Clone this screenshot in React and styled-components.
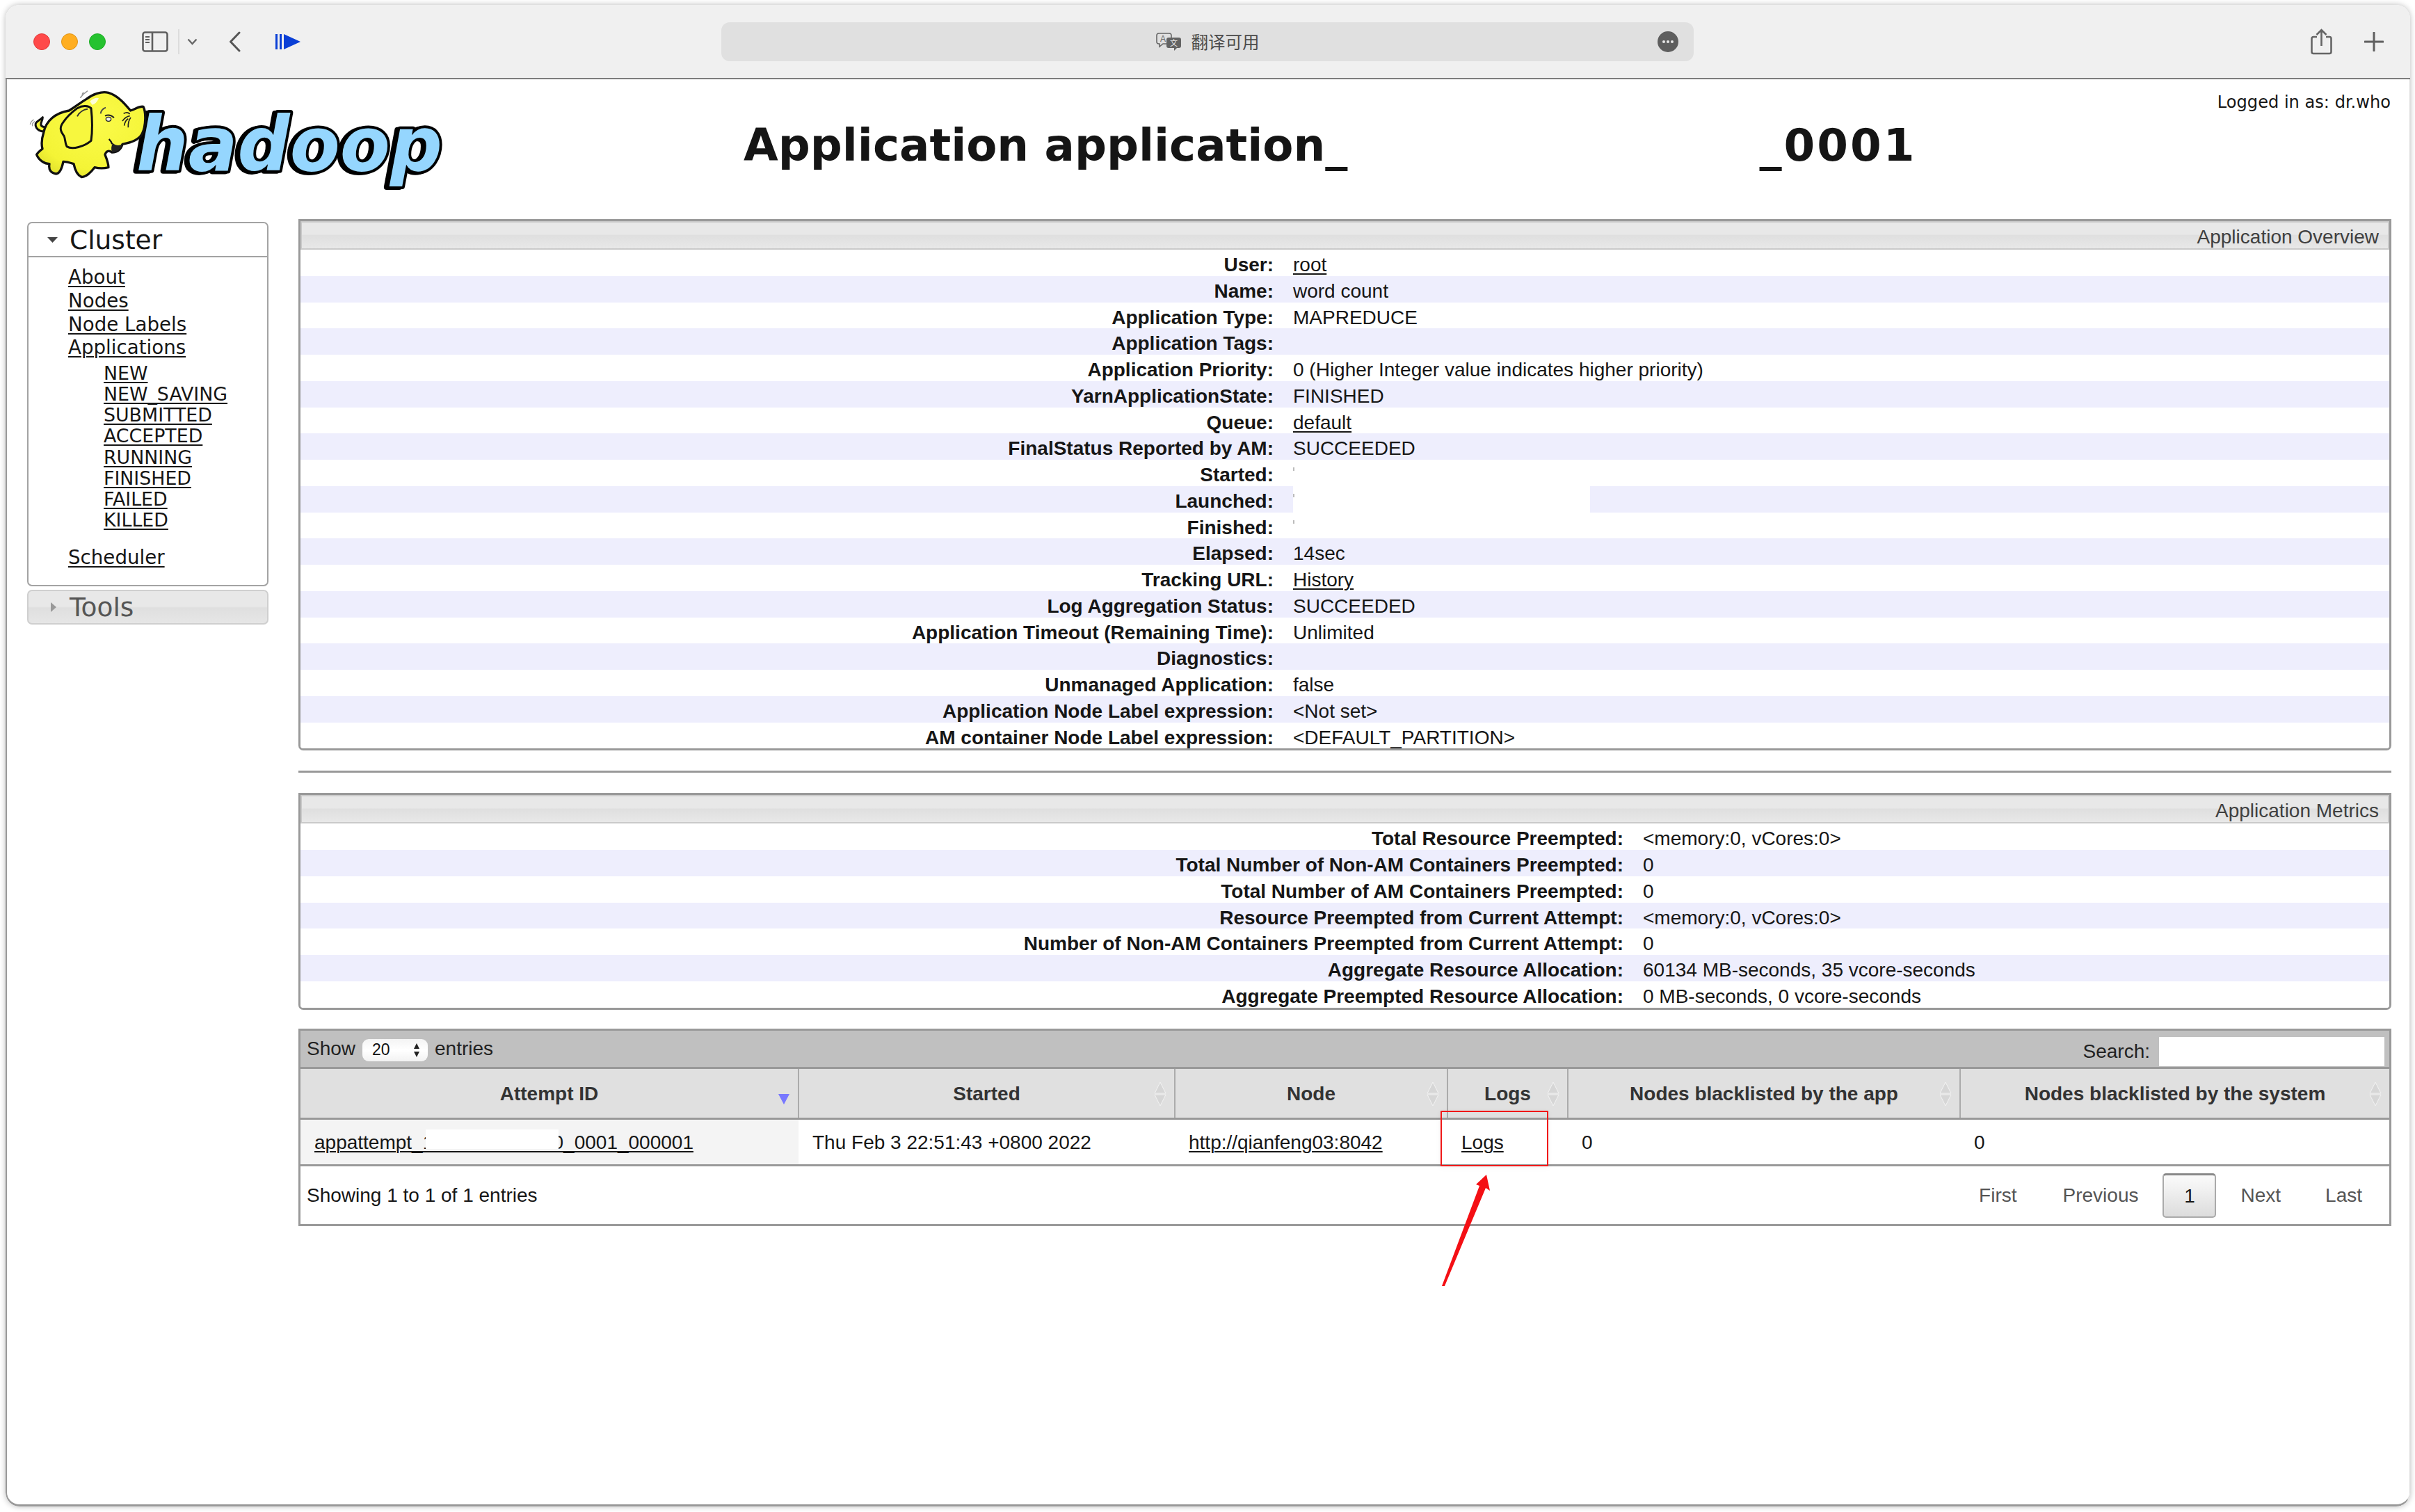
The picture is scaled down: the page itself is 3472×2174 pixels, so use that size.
import React from "react";
import styled, { createGlobalStyle } from "styled-components";

const Global = createGlobalStyle`
  html, body { margin: 0; padding: 0; background: #fff; }
  body { font-family: "Liberation Sans", Arial, sans-serif; color: #161616; }
  * { box-sizing: border-box; }
`;

const Page = styled.div`
  position: relative;
  width: 3472px;
  height: 2174px;
  padding: 7px 7px 8px 8px;
  overflow: hidden;
  background: #fff;
`;
const Win = styled.div`
  height: 100%;
  display: flex;
  flex-direction: column;
  border-radius: 20px;
  box-shadow: 0 0 8px rgba(0, 0, 0, 0.28);
  overflow: hidden;
`;
const TitleBar = styled.div`
  flex: none;
  height: 107px;
  display: flex;
  align-items: center;
  padding: 0 38px 0 40px;
  background: #f0f0f0;
  border-bottom: 2px solid #7d7d7d;
`;
const Light = styled.span`
  width: 24px;
  height: 24px;
  margin-right: 16px;
  border-radius: 50%;
  background: ${(p) => p.$c};
  border: 1px solid ${(p) => p.$b};
`;
const BarIcon = styled.svg`
  flex: none;
  display: block;
  margin-left: ${(p) => p.$ml || 0}px;
`;
const BarDivider = styled.span`
  width: 2px;
  height: 36px;
  margin-left: 14px;
  background: #dcdcdc;
`;
const AddressBar = styled.div`
  position: relative;
  flex: none;
  width: 1398px;
  height: 56px;
  margin-left: 605px;
  display: flex;
  align-items: center;
  justify-content: center;
  gap: 15px;
  border-radius: 12px;
  background: #e0e0e0;
  color: #4c4c4c;
  font: 24.500px "Noto Sans CJK SC", sans-serif;
`;
const MoreDots = styled.span`
  position: absolute;
  right: 22px;
  top: 13px;
  width: 30px;
  height: 30px;
  border-radius: 50%;
  background: #5e5e5e;
  display: flex;
  align-items: center;
  justify-content: center;
  gap: 2px;
  & > i {
    width: 4px;
    height: 4px;
    border-radius: 50%;
    background: #e8e8e8;
  }
`;
const BarEnd = styled.div`
  margin-left: auto;
  display: flex;
  align-items: center;
  gap: 46px;
`;

const Content = styled.div`
  flex: 1;
  min-height: 0;
  background: #fff;
  border-left: 2px solid #999;
  border-right: 1px solid #ddd;
  border-bottom: 3px solid #999;
  border-radius: 0 0 20px 20px;
`;
const Header = styled.header`
  height: 201px;
  display: flex;
  align-items: flex-start;
`;
const Logo = styled.svg`
  flex: none;
  display: block;
  margin: 10px 0 0 26px;
`;
const Title = styled.h1`
  margin: 50px 0 0 409px;
  font: 700 64.300px/90px "DejaVu Sans", Verdana, sans-serif;
  color: #151515;
  white-space: nowrap;
`;
const TitleEnd = styled.span`
  margin-left: 592px;
  letter-spacing: 3px;
`;
const LoggedIn = styled.div`
  margin: 17px 27px 0 auto;
  font: 24.100px/32px "DejaVu Sans", Verdana, sans-serif;
  color: #161616;
  white-space: nowrap;
`;

const Body = styled.div`
  display: flex;
  align-items: flex-start;
  gap: 43px;
  padding: 0 26px 0 29px;
`;
const Nav = styled.nav`
  flex: none;
  width: 347px;
  padding-top: 4px;
  font-family: "DejaVu Sans", Verdana, sans-serif;
`;
const Accordion = styled.div`
  border: 2px solid #a3a3a3;
  border-radius: 7px;
  margin-bottom: 5px;
`;
const AccordionHead = styled.div`
  height: 49px;
  display: flex;
  align-items: center;
  font-size: 37.500px;
  color: #161616;
  border-bottom: 2px solid #a3a3a3;
  & > svg { margin: 0 17px 0 27px; flex: none; }
`;
const Links = styled.div`
  padding: 13px 0 21px 57px;
`;
const NavLink = styled.a`
  display: block;
  height: 33.800px;
  font-size: 27.700px;
  line-height: 32px;
  color: #161616;
  text-decoration: underline;
  text-underline-offset: 3px;
  text-decoration-thickness: 2px;
`;
const SubLinks = styled.div`
  padding: 5px 0 0 51px;
  margin-bottom: 22px;
`;
const SubLink = styled.a`
  display: block;
  height: 30.100px;
  font-size: 26.800px;
  line-height: 28px;
  color: #161616;
  text-decoration: underline;
  text-underline-offset: 3px;
  text-decoration-thickness: 2px;
`;
const ToolsBar = styled.div`
  height: 50px;
  display: flex;
  align-items: center;
  border: 2px solid #cfcfcf;
  border-radius: 7px;
  background: linear-gradient(#e8e8e8 0 48%, #dfdfdf 52%, #e6e6e6 100%);
  font-size: 37.500px;
  color: #555;
  & > svg { margin: 0 19px 0 32px; flex: none; }
`;

const Main = styled.main`
  flex: 1;
  min-width: 0;
`;
const Panel = styled.section`
  border: 3px solid #999;
  border-radius: 0 0 7px 7px;
  overflow: hidden;
`;
const PanelHead = styled.div`
  height: 41px;
  padding-right: 13px;
  text-align: right;
  font-size: 28px;
  line-height: 42px;
  color: #404040;
  background: linear-gradient(#e8e8e8 0 45%, #dfdfdf 50%, #e8e8e8 100%);
  border: 2px solid #cacaca;
`;
const Row = styled.div`
  display: grid;
  grid-template-columns: ${(p) => p.$label}px 1fr;
  column-gap: 28px;
  height: 37.750px;
  font-size: 28px;
  line-height: 43px;
  white-space: nowrap;
  background: ${(p) => (p.$alt ? "#eeeefd" : "#fff")};
`;
const Label = styled.div`
  text-align: right;
  font-weight: 700;
`;
const Value = styled.div``;
const ValueLink = styled.a`
  color: #161616;
  text-decoration: underline;
  text-decoration-thickness: 2px;
  text-underline-offset: 3px;
`;
const Hidden = styled.div`
  position: relative;
  width: 427px;
  height: 100%;
  background: ${(p) => (p.$mask ? "#fff" : "transparent")};
  &::before {
    content: "";
    position: absolute;
    left: 0;
    top: 11px;
    width: 2px;
    height: 5px;
    background: #bbb;
  }
`;
const Rule = styled.hr`
  height: 3px;
  margin: 29px 0;
  border: 0;
  background: #999;
`;
const TableBox = styled.section`
  margin-top: 27px;
  border: 3px solid #999;
`;
const Toolbar = styled.div`
  height: 55px;
  display: flex;
  align-items: flex-start;
  justify-content: space-between;
  padding: 0 7px 0 9px;
  background: #c0c0c0;
  border-bottom: 3px solid #999;
  font-size: 28px;
  color: #222;
`;
const ShowEntries = styled.div`
  display: flex;
  align-items: center;
  gap: 10px;
  height: 53px;
`;
const SelectBox = styled.div`
  width: 94px;
  height: 32px;
  margin-top: 3px;
  display: flex;
  align-items: center;
  justify-content: space-between;
  padding: 0 11px 0 14px;
  border-radius: 9px;
  background: linear-gradient(#f4f4f4, #fff 50%, #f2f2f2);
  font-size: 23px;
  color: #111;
`;
const SearchBox = styled.label`
  display: flex;
  align-items: center;
  gap: 13px;
  margin-top: 9px;
`;
const SearchInput = styled.input`
  width: 324px;
  height: 42px;
  border: 0;
  padding: 0;
  background: #fff;
`;
const Grid = styled.table`
  width: 100%;
  border-collapse: collapse;
  table-layout: fixed;
  font-size: 28px;
`;
const Th = styled.th`
  position: relative;
  height: 72px;
  padding: 2px 0 0;
  text-align: center;
  font-weight: 700;
  color: #333;
  background: #e0e0e0;
  border-left: 2px solid #ababab;
  &:first-child { border-left: 0; }
`;
const SortMark = styled.svg`
  position: absolute;
  right: 11px;
  top: 19px;
`;
const SortArrow = styled.svg`
  position: absolute;
  right: 12px;
  top: 36px;
`;
const Td = styled.td`
  position: relative;
  height: 67px;
  padding: 2px 0 0 20px;
  line-height: 30px;
  border-top: 3px solid #999;
  border-bottom: 3px solid #999;
  background: ${(p) => (p.$sorted ? "#f4f4f4" : "#fff")};
  color: #161616;
`;
const CellLink = styled.a`
  color: #161616;
  text-decoration: underline;
  text-decoration-thickness: 2px;
  text-underline-offset: 3px;
`;
const Mask = styled.span`
  position: absolute;
  left: 180px;
  top: 14px;
  width: 191px;
  height: 28px;
  background: #fff;
`;
const Footer = styled.div`
  height: 83px;
  display: flex;
  align-items: center;
  justify-content: space-between;
  padding: 1px 39px 0 9px;
  font-size: 28px;
`;
const Pager = styled.div`
  display: flex;
  align-items: center;
  color: #555;
`;
const PageItem = styled.span`
  margin-left: ${(p) => p.$ml}px;
`;
const PageCurrent = styled.span`
  width: 77px;
  height: 64px;
  margin-left: 35px;
  display: flex;
  align-items: center;
  justify-content: center;
  color: #161616;
  border: 2px solid #aaa;
  border-top: 3px solid #888;
  border-radius: 5px;
  background: linear-gradient(#fbfbfb, #dcdcdc);
`;
const RedBox = styled.div`
  position: absolute;
  left: 2071px;
  top: 1597px;
  width: 155px;
  height: 80px;
  border: 2px solid #f01818;
  box-shadow: 0 2px 8px rgba(0, 0, 0, 0.05);
`;
const Arrow = styled.svg`
  position: absolute;
  left: 2060px;
  top: 1680px;
`;

const overview = [
  ["User:", <ValueLink>root</ValueLink>],
  ["Name:", "word count"],
  ["Application Type:", "MAPREDUCE"],
  ["Application Tags:", ""],
  ["Application Priority:", "0 (Higher Integer value indicates higher priority)"],
  ["YarnApplicationState:", "FINISHED"],
  ["Queue:", <ValueLink>default</ValueLink>],
  ["FinalStatus Reported by AM:", "SUCCEEDED"],
  ["Started:", <Hidden />],
  ["Launched:", <Hidden $mask />],
  ["Finished:", <Hidden />],
  ["Elapsed:", "14sec"],
  ["Tracking URL:", <ValueLink>History</ValueLink>],
  ["Log Aggregation Status:", "SUCCEEDED"],
  ["Application Timeout (Remaining Time):", "Unlimited"],
  ["Diagnostics:", ""],
  ["Unmanaged Application:", "false"],
  ["Application Node Label expression:", "<Not set>"],
  ["AM container Node Label expression:", "<DEFAULT_PARTITION>"],
];
const metrics = [
  ["Total Resource Preempted:", "<memory:0, vCores:0>"],
  ["Total Number of Non-AM Containers Preempted:", "0"],
  ["Total Number of AM Containers Preempted:", "0"],
  ["Resource Preempted from Current Attempt:", "<memory:0, vCores:0>"],
  ["Number of Non-AM Containers Preempted from Current Attempt:", "0"],
  ["Aggregate Resource Allocation:", "60134 MB-seconds, 35 vcore-seconds"],
  ["Aggregate Preempted Resource Allocation:", "0 MB-seconds, 0 vcore-seconds"],
];
const columns = [
  ["Attempt ID", 716],
  ["Started", 541],
  ["Node", 392],
  ["Logs", 173],
  ["Nodes blacklisted by the app", 564],
  ["Nodes blacklisted by the system", 617],
];
const subLinks = ["NEW", "NEW_SAVING", "SUBMITTED", "ACCEPTED", "RUNNING", "FINISHED", "FAILED", "KILLED"];

const InfoPanel = ({ title, rows, label }) => (
  <Panel>
    <PanelHead>{title}</PanelHead>
    {rows.map(([k, v], i) => (
      <Row key={k} $label={label} $alt={i % 2 === 1}>
        <Label>{k}</Label>
        <Value>{v}</Value>
      </Row>
    ))}
  </Panel>
);

const HadoopLogo = () => (
  <Logo width="624" height="150" viewBox="36 124 624 150">
    <defs>
      <radialGradient id="elephantFill" cx="0.55" cy="0.35" r="0.8">
        <stop offset="0" stopColor="#fbfb4a" />
        <stop offset="0.7" stopColor="#f4f436" />
        <stop offset="1" stopColor="#d8d828" />
      </radialGradient>
    </defs>
    <text
      x="196"
      y="245"
      fontFamily="'DejaVu Sans', sans-serif"
      fontWeight="700"
      fontStyle="italic"
      fontSize="108"
      textLength="440"
      lengthAdjust="spacingAndGlyphs"
      fill="#95d6fe"
      stroke="#000"
      strokeWidth="8"
      strokeLinejoin="round"
      paintOrder="stroke"
      style={{ filter: "drop-shadow(-4px 1px 0 #000)" }}
    >
      hadoop
    </text>
    <g transform="translate(36 124) scale(0.3333)">
      <path d="M80 195C60 195 42 180 46 160C52 148 66 146 76 134C76 150 64 158 70 170C74 176 84 176 90 178Z" fill="#f4f436" stroke="#111" strokeWidth="9" strokeLinejoin="round" />
      <path d="M80 200C90 150 130 115 190 105C215 90 240 70 265 55C290 35 330 20 360 28C400 40 430 75 455 105C475 100 490 85 510 88C522 110 522 170 505 205C490 235 450 245 420 250C415 270 400 285 375 285C360 275 350 280 345 295C355 320 360 340 360 350C340 355 320 355 300 350C285 370 265 390 245 392C225 385 215 360 210 335C195 330 175 325 165 325C160 350 150 375 135 378C115 375 100 365 105 335C85 335 60 320 50 295C55 285 65 278 75 270C70 250 72 225 80 200Z" fill="url(#elephantFill)" stroke="#111" strokeWidth="10" strokeLinejoin="round" />
      <path d="M225 95C250 80 275 85 285 95C290 140 290 200 285 235C255 260 205 275 180 260C170 240 175 220 165 210C150 190 150 175 165 155C185 125 205 110 225 95Z" fill="#f7f73e" stroke="#111" strokeWidth="9" strokeLinejoin="round" />
      <path d="M225 130C235 110 255 100 270 98" fill="none" stroke="#333" strokeWidth="6" />
      <path d="M280 65C295 50 310 48 318 52C312 66 300 80 290 80Z" fill="#fdfdd8" />
      <path d="M375 285C370 270 372 258 378 245C392 256 405 258 418 250C415 270 400 285 375 285Z" fill="#222" />
      <path d="M362 228C370 236 374 242 376 250" fill="none" stroke="#111" strokeWidth="7" />
      <ellipse cx="360" cy="142" rx="11" ry="9" fill="#eee" stroke="#222" strokeWidth="4" />
      <path d="M345 128C358 122 372 125 384 136" fill="none" stroke="#222" strokeWidth="6" />
      <path d="M326 118C328 106 336 96 348 92" fill="none" stroke="#444" strokeWidth="6" />
      <path d="M425 118C435 112 445 112 452 120M420 150C430 136 440 130 452 128M445 178C444 160 448 145 456 135M428 170C430 155 436 145 445 140" fill="none" stroke="#222" strokeWidth="5" />
      <path d="M238 50C245 40 255 30 270 20M246 36L252 26" fill="none" stroke="#999" strokeWidth="5" />
      <path d="M22 165C24 155 30 148 38 144M32 172C30 164 34 156 42 152" fill="none" stroke="#999" strokeWidth="4" />
    </g>
  </Logo>
);

export default function App() {
  return (
    <Page>
      <Global />
      <Win>
        <TitleBar>
          <Light $c="#ff4a4a" $b="#e23a3a" />
          <Light $c="#ffae21" $b="#e09416" />
          <Light $c="#25c22f" $b="#1ead26" />
          <BarIcon $ml={36} width="38" height="30" viewBox="0 0 38 30">
            <rect x="1.500" y="1.500" width="35" height="27" rx="3" fill="none" stroke="#5f5f5f" strokeWidth="2.600" />
            <path d="M15 2V28" stroke="#5f5f5f" strokeWidth="2.600" />
            <path d="M5 8H11M5 12H11M5 16H11" stroke="#5f5f5f" strokeWidth="2" />
          </BarIcon>
          <BarDivider />
          <BarIcon $ml={11} width="15" height="10" viewBox="0 0 15 10">
            <path d="M1.500 1.500L7.500 8L13.500 1.500" fill="none" stroke="#666" strokeWidth="2.400" />
          </BarIcon>
          <BarIcon $ml={45} width="17" height="30" viewBox="0 0 17 30">
            <path d="M15 2L2.500 15L15 28" fill="none" stroke="#555" strokeWidth="3" strokeLinecap="round" strokeLinejoin="round" />
          </BarIcon>
          <BarIcon $ml={50} width="36" height="22" viewBox="0 0 36 22">
            <path d="M0 0H3V22H0ZM6 0H9V22H6ZM12 0L36 11L12 22Z" fill="#0a3fd6" />
          </BarIcon>
          <AddressBar>
            <svg width="36" height="26" viewBox="0 0 36 26">
              <path d="M4 1H19A3 3 0 0 1 22 4V13A3 3 0 0 1 19 16H10L5 20V16H4A3 3 0 0 1 1 13V4A3 3 0 0 1 4 1Z" fill="none" stroke="#666" strokeWidth="1.600" />
              <text x="6" y="13" fontSize="12" fontFamily="'Liberation Sans'" fill="#666">A</text>
              <path d="M18 7H33A3 3 0 0 1 36 10V19A3 3 0 0 1 33 22H30L26 26V22H18A3 3 0 0 1 15 19V10A3 3 0 0 1 18 7Z" fill="#636363" />
              <text x="20" y="19" fontSize="11" fontFamily="'Noto Sans CJK SC'" fill="#eee">文</text>
            </svg>
            <span>翻译可用</span>
            <MoreDots><i /><i /><i /></MoreDots>
          </AddressBar>
          <BarEnd>
            <BarIcon width="31" height="38" viewBox="0 0 31 38">
              <path d="M9 12H4A2.500 2.500 0 0 0 1.500 14.500V33.500A2.500 2.500 0 0 0 4 36H27A2.500 2.500 0 0 0 29.500 33.500V14.500A2.500 2.500 0 0 0 27 12H22" fill="none" stroke="#666" strokeWidth="2.600" />
              <path d="M15.500 25V3M8.500 9L15.500 2L22.500 9" fill="none" stroke="#666" strokeWidth="2.600" />
            </BarIcon>
            <BarIcon width="28" height="28" viewBox="0 0 28 28">
              <path d="M14 1V27M1 14H27" stroke="#5f5f5f" strokeWidth="3" strokeLinecap="round" />
            </BarIcon>
          </BarEnd>
        </TitleBar>
        <Content>
          <Header>
            <HadoopLogo />
            <Title>
              Application application_<TitleEnd>_0001</TitleEnd>
            </Title>
            <LoggedIn>Logged in as: dr.who</LoggedIn>
          </Header>
          <Body>
            <Nav>
              <Accordion>
                <AccordionHead>
                  <svg width="15" height="8" viewBox="0 0 15 8"><path d="M0 0H15L7.500 8Z" fill="#444" /></svg>
                  Cluster
                </AccordionHead>
                <Links>
                  <NavLink>About</NavLink>
                  <NavLink>Nodes</NavLink>
                  <NavLink>Node Labels</NavLink>
                  <NavLink>Applications</NavLink>
                  <SubLinks>
                    {subLinks.map((s) => <SubLink key={s}>{s}</SubLink>)}
                  </SubLinks>
                  <NavLink>Scheduler</NavLink>
                </Links>
              </Accordion>
              <ToolsBar>
                <svg width="8" height="14" viewBox="0 0 8 14"><path d="M0 0L8 7L0 14Z" fill="#999" /></svg>
                Tools
              </ToolsBar>
            </Nav>
            <Main>
              <InfoPanel title="Application Overview" rows={overview} label={1399} />
              <Rule />
              <InfoPanel title="Application Metrics" rows={metrics} label={1902} />
              <TableBox>
                <Toolbar>
                  <ShowEntries>
                    Show
                    <SelectBox>
                      20
                      <svg width="10" height="20" viewBox="0 0 10 20"><path d="M5 0L9 8H1ZM5 20L1 12H9Z" fill="#222" /></svg>
                    </SelectBox>
                    entries
                  </ShowEntries>
                  <SearchBox>
                    Search:
                    <SearchInput />
                  </SearchBox>
                </Toolbar>
                <Grid>
                  <colgroup>
                    {columns.map(([n, w]) => <col key={n} style={{ width: w }} />)}
                  </colgroup>
                  <thead>
                    <tr>
                      {columns.map(([n], i) => (
                        <Th key={n}>
                          {n}
                          {i === 0 ? (
                            <SortArrow width="16" height="15" viewBox="0 0 16 15"><path d="M0 0H16L8 15Z" fill="#7878ff" /></SortArrow>
                          ) : (
                            <SortMark width="18" height="34" viewBox="0 0 18 34">
                              <path d="M9 0L17 16H1ZM9 34L1 18H17Z" fill="#d6d6d6" stroke="#f2f2f2" strokeWidth="1" />
                            </SortMark>
                          )}
                        </Th>
                      ))}
                    </tr>
                  </thead>
                  <tbody>
                    <tr>
                      <Td $sorted>
                        <CellLink>appattempt_1643899570570_0001_000001</CellLink>
                        <Mask />
                      </Td>
                      <Td>Thu Feb 3 22:51:43 +0800 2022</Td>
                      <Td><CellLink>http://qianfeng03:8042</CellLink></Td>
                      <Td><CellLink>Logs</CellLink></Td>
                      <Td>0</Td>
                      <Td>0</Td>
                    </tr>
                  </tbody>
                </Grid>
                <Footer>
                  <span>Showing 1 to 1 of 1 entries</span>
                  <Pager>
                    <PageItem $ml={0}>First</PageItem>
                    <PageItem $ml={66}>Previous</PageItem>
                    <PageCurrent>1</PageCurrent>
                    <PageItem $ml={35}>Next</PageItem>
                    <PageItem $ml={64}>Last</PageItem>
                  </Pager>
                </Footer>
              </TableBox>
            </Main>
          </Body>
        </Content>
      </Win>
      <RedBox />
      <Arrow width="90" height="175" viewBox="2060 1680 90 175">
        <path d="M2137 1689L2142 1712L2136 1708L2077 1849L2073 1849L2127 1705L2122 1703Z" fill="#f40f14" />
      </Arrow>
    </Page>
  );
}
